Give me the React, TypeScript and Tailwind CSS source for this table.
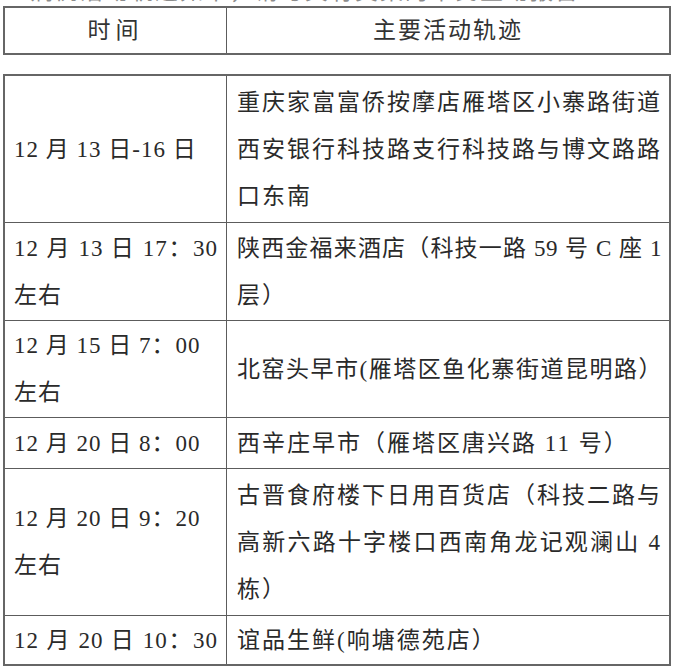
import React from 'react';

type LineData = { text: string; full?: boolean; tight?: boolean };

type Row = {
  h: string;
  left: LineData[];
  right: LineData[];
};

const rows: Row[] = [
  {
    h: 'h-[146px]',
    left: [{ text: '12 月 13 日-16 日' }],
    right: [
      { text: '重庆家富富侨按摩店雁塔区小寨路街道', full: true },
      { text: '西安银行科技路支行科技路与博文路路', full: true },
      { text: '口东南' },
    ],
  },
  {
    h: 'h-[98px] border-t border-[#5c5c5c]',
    left: [{ text: '12 月 13 日 17：30', full: true }, { text: '左右' }],
    right: [{ text: '陕西金福来酒店（科技一路 59 号 C 座 1', full: true, tight: true }, { text: '层）' }],
  },
  {
    h: 'h-[97px] border-t border-[#5c5c5c]',
    left: [{ text: '12 月 15 日 7：00' }, { text: '左右' }],
    right: [{ text: '北窑头早市(雁塔区鱼化寨街道昆明路）', full: true, tight: true }],
  },
  {
    h: 'h-[51px] border-t border-[#5c5c5c]',
    left: [{ text: '12 月 20 日 8：00' }],
    right: [{ text: '西辛庄早市（雁塔区唐兴路 11 号）' }],
  },
  {
    h: 'h-[147px] border-t border-[#5c5c5c]',
    left: [{ text: '12 月 20 日 9：20' }, { text: '左右' }],
    right: [
      { text: '古晋食府楼下日用百货店（科技二路与', full: true },
      { text: '高新六路十字楼口西南角龙记观澜山 4', full: true },
      { text: '栋）' },
    ],
  },
  {
    h: 'h-[49px] border-t border-[#5c5c5c]',
    left: [{ text: '12 月 20 日 10：30', full: true }],
    right: [{ text: '谊品生鲜(响塘德苑店）' }],
  },
];

const Line = ({ text, full, tight }: LineData) => (
  <div
    className={
      full
        ? tight
          ? 'whitespace-nowrap tracking-[0.5px] text-justify [text-align-last:justify]'
          : 'whitespace-nowrap text-justify [text-align-last:justify]'
        : 'whitespace-nowrap'
    }
  >
    {text}
  </div>
);

const App: React.FC = () => {
  return (
    <div className="w-[677px] h-[669px] overflow-hidden bg-white text-[#2a2a2a] [font-family:'Liberation_Serif','Noto_Sans_CJK_SC',serif] text-[23px] tracking-[2px]">
      {/* cut-off line of text above the table */}
      <div className="h-[5px] overflow-hidden pl-[30px]">
        <div className="-mt-[32px] leading-[47px] text-[#8c8c8c] whitespace-nowrap">
          病例活动轨迹如下，请与其有交集的市民主动报备
        </div>
      </div>

      <div className="mt-[1px] ml-[3px] w-[668px] h-[49px] border-2 border-[#666] grid grid-cols-[221px_1fr] text-[#333]">
        <div className="flex items-center justify-center pt-[1px] tracking-[5px]">时间</div>
        <div className="flex items-center justify-center border-l border-[#5c5c5c] pt-[1px]">主要活动轨迹</div>
      </div>

      <div className="mt-[19px] ml-[3px] w-[668px] border-2 border-[#666]">
        {rows.map((r, i) => (
          <div key={i} className={`grid grid-cols-[221px_1fr] ${r.h}`}>
            <div className="flex flex-col justify-center pl-[9px] pr-[8px] leading-[47px] tracking-[1px]">
              {r.left.map((l, j) => (
                <Line key={j} text={l.text} full={l.full} />
              ))}
            </div>
            <div className="flex flex-col justify-center border-l border-[#5c5c5c] pl-[10px] pr-[7px] leading-[47px]">
              {r.right.map((l, j) => (
                <Line key={j} {...l} />
              ))}
            </div>
          </div>
        ))}
      </div>
    </div>
  );
};

export default App;
